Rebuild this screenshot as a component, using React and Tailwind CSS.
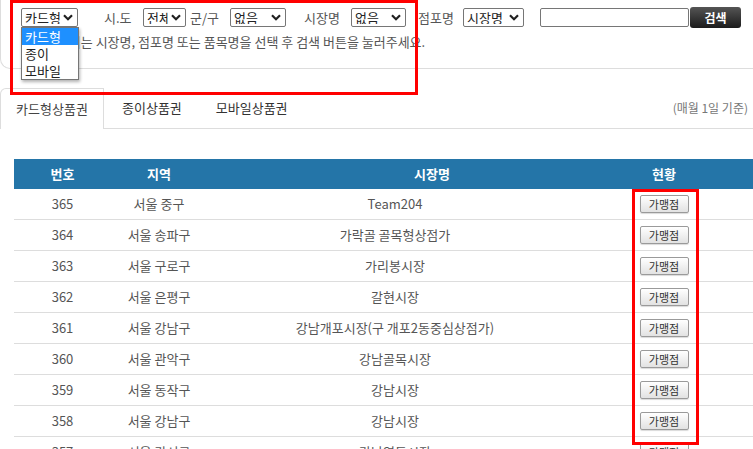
import React from "react";

const FONT = { fontFamily: '"Noto Sans CJK KR", "Noto Sans", sans-serif' };

const rows = [
  ["365", "서울 중구", "Team204"],
  ["364", "서울 송파구", "가락골 골목형상점가"],
  ["363", "서울 구로구", "가리봉시장"],
  ["362", "서울 은평구", "갈현시장"],
  ["361", "서울 강남구", "강남개포시장(구 개포2동중심상점가)"],
  ["360", "서울 관악구", "강남골목시장"],
  ["359", "서울 동작구", "강남시장"],
  ["358", "서울 강남구", "강남시장"],
  ["357", "서울 강서구", "강남영동시장"],
];

// chevron used in the fake select boxes
const Chevron = () => (
  <svg width="10" height="7" viewBox="0 0 10 7" className="shrink-0">
    <path d="M1 1.2 L5 5.2 L9 1.2" fill="none" stroke="#222" strokeWidth="2.2" />
  </svg>
);

const SelectBox = ({ label, width, textWidth }) => (
  <div
    className="flex h-[19px] items-center justify-between overflow-hidden rounded-[2px] border border-[#767676] bg-white pl-[3px] pr-[4px] text-[13px] leading-none text-[#222]"
    style={{ width }}
  >
    <span className="overflow-hidden whitespace-nowrap" style={{ width: textWidth }}>
      {label}
    </span>
    <Chevron />
  </div>
);

const StoreButton = () => (
  <button className="flex h-[18px] w-[49px] items-center justify-center rounded-[2px] border border-[#9a9a9a] bg-gradient-to-b from-white to-[#e2e2e2] text-[11px] leading-none text-[#333] shadow-[0_1px_1px_rgba(0,0,0,0.15)]">
    가맹점
  </button>
);

export default function App() {
  return (
    <div className="relative h-[449px] w-[753px] overflow-hidden bg-white text-[#555]" style={FONT}>
      {/* search panel */}
      <div className="rounded-bl-[10px] border-b border-l border-[#dddddd] pb-[17px] pt-[7px]">
        <div className="flex h-[21px] items-center text-[13px] text-[#555]">
          <div className="ml-[20px]">
            <SelectBox label="카드형" width={57} textWidth={38} />
          </div>
          <span className="ml-[26px] w-[39px] whitespace-nowrap">시.도</span>
          <SelectBox label="전체" width={43} textWidth={21} />
          <span className="ml-[4px] w-[40px] whitespace-nowrap">군/구</span>
          <SelectBox label="없음" width={56} textWidth={36} />
          <span className="ml-[18px] w-[47px] whitespace-nowrap">시장명</span>
          <SelectBox label="없음" width={55} textWidth={36} />
          <span className="ml-[12px] w-[45px] whitespace-nowrap">점포명</span>
          <SelectBox label="시장명" width={61} textWidth={42} />
          <input
            className="ml-[16px] h-[19px] w-[149px] rounded-[2px] border border-[#767676] bg-white px-1 text-[13px] outline-none"
            readOnly
          />
          <button className="ml-[1px] h-[21px] w-[51px] rounded-[3px] bg-gradient-to-b from-[#555] to-[#1c1c1c] text-[12px] font-bold leading-none text-white">
            검색
          </button>
        </div>
        <p className="ml-[28px] mt-[5px] h-[18px] whitespace-nowrap text-[13px] leading-[18px] text-[#555]">
          ※ 검색어는 시장명, 점포명 또는 품목명을 선택 후 검색 버튼을 눌러주세요.
        </p>
      </div>

      {/* tabs */}
      <div className="mt-[19px] flex h-[41px] items-stretch text-[13px]">
        <div className="flex w-[104px] items-center justify-center rounded-tl-[6px] border-l border-r border-t border-[#dddddd] text-[#444]">
          카드형상품권
        </div>
        <div className="flex flex-1 items-center border-b border-[#dddddd] text-[#333]">
          <span className="ml-[18px]">종이상품권</span>
          <span className="ml-[34px]">모바일상품권</span>
          <span className="ml-auto mr-[5px] text-[12px] text-[#777]">(매월 1일 기준)</span>
        </div>
      </div>

      {/* table */}
      <div className="ml-[14px] mt-[30px] text-[13px]">
        <div className="flex h-[30px] items-center bg-[#2475a8] font-bold text-white">
          <div className="w-[97px] text-center">번호</div>
          <div className="w-[96px] text-center">지역</div>
          <div className="w-[376px] pl-[74px] text-center">시장명</div>
          <div className="w-[162px] text-center">현황</div>
        </div>
        {rows.map(([no, region, name]) => (
          <div key={no} className="flex h-[31px] items-center border-b border-[#dddddd] text-[#555]">
            <div className="w-[97px] text-center">{no}</div>
            <div className="w-[96px] text-center">{region}</div>
            <div className="w-[376px] whitespace-nowrap text-center">{name}</div>
            <div className="flex w-[162px] justify-center">
              <StoreButton />
            </div>
          </div>
        ))}
      </div>

      {/* open dropdown of the first select */}
      <div className="absolute left-[21px] top-[27px] w-[58px] border border-[#767676] bg-white text-[13px] leading-[17px] text-[#222] shadow-[1px_2px_3px_rgba(0,0,0,0.3)]">
        <div className="bg-[#1e90ff] pl-[3px] text-white">카드형</div>
        <div className="pl-[3px]">종이</div>
        <div className="pl-[3px]">모바일</div>
      </div>

      {/* red annotation boxes */}
      <div className="pointer-events-none absolute left-[10px] top-0 h-[95px] w-[408px] border-[3px] border-[#ff0000]" />
      <div className="pointer-events-none absolute left-[632px] top-[189px] h-[256px] w-[67px] border-[3px] border-[#ff0000]" />
    </div>
  );
}
